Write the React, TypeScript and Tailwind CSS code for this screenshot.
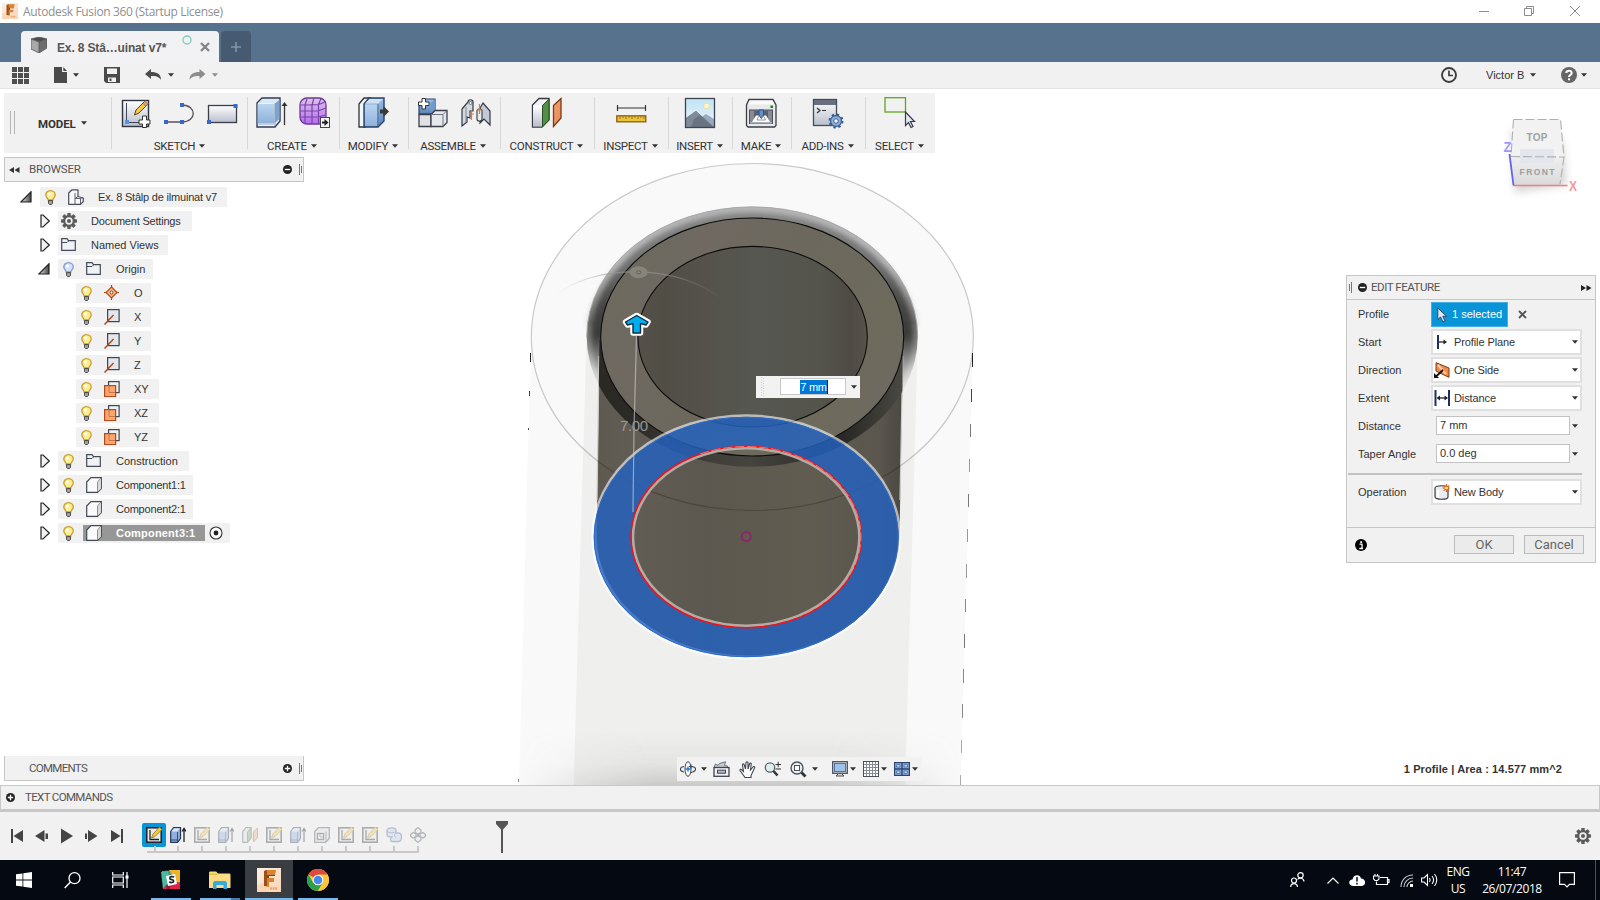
import React from "react";

type IconProps = { w?: number; h?: number; vb?: string; cls?: string; children?: React.ReactNode };

function Svg({ w = 16, h = 16, vb, cls = "", children }: IconProps) {
  return (
    <svg width={w} height={h} viewBox={vb ?? `0 0 ${w} ${h}`} className={`block shrink-0 ${cls}`} fill="none">
      {children}
    </svg>
  );
}

function Caret({ cls = "", color = "#333", w = 7 }: { cls?: string; color?: string; w?: number }) {
  return (
    <Svg w={w} h={4} vb="0 0 7 4" cls={cls}>
      <path d="M0 0H7L3.5 4Z" fill={color} />
    </Svg>
  );
}

/* ---------- shared gradients ---------- */
function Defs() {
  return (
    <svg width="0" height="0" className="absolute">
      <defs>
        <linearGradient id="gLight" x1="0" y1="0" x2="0" y2="1">
          <stop offset="0" stopColor="#fff" />
          <stop offset="1" stopColor="#b9becb" />
        </linearGradient>
        <linearGradient id="gBlue" x1="0" y1="0" x2="0" y2="1">
          <stop offset="0" stopColor="#b9d4ef" />
          <stop offset="1" stopColor="#8fb2da" />
        </linearGradient>
        <linearGradient id="gBlueDk" x1="0" y1="0" x2="0" y2="1">
          <stop offset="0" stopColor="#9dc0e6" />
          <stop offset="1" stopColor="#5783bb" />
        </linearGradient>
        <linearGradient id="gPurple" x1="0" y1="0" x2="0" y2="1">
          <stop offset="0" stopColor="#dcc4ea" />
          <stop offset="1" stopColor="#b86bf2" />
        </linearGradient>
        <linearGradient id="gSky" x1="0" y1="0" x2="0" y2="1">
          <stop offset="0" stopColor="#bfe3f5" />
          <stop offset="1" stopColor="#eef7fb" />
        </linearGradient>
        <linearGradient id="gTri" x1="0" y1="0" x2="1" y2="0">
          <stop offset="0" stopColor="#eee" />
          <stop offset="1" stopColor="#444" />
        </linearGradient>
        <linearGradient id="gOrange" x1="0" y1="0" x2="1" y2="1">
          <stop offset="0" stopColor="#f0a070" />
          <stop offset="1" stopColor="#e98a55" />
        </linearGradient>
        <linearGradient id="gFusion" x1="0" y1="0" x2="1" y2="1">
          <stop offset="0" stopColor="#fdf1e7" />
          <stop offset="1" stopColor="#f9d3b4" />
        </linearGradient>
      </defs>
    </svg>
  );
}

/* ---------- title, tabs and quick access ---------- */
function FusionLogo({ size }: { size: number }) {
  return (
    <Svg w={size} h={size} vb="0 0 24 24">
      <rect width="24" height="24" fill="url(#gFusion)" />
      <path d="M0 17L12 12V24H0Z" fill="#f8c9a4" opacity=".5" />
      <path d="M7 3L10 2H19L18 7H12V10H17V14H12V19L7 18Z" fill="#d9822f" />
      <path d="M7 3L10 2V18L7 18Z" fill="#9c4f1a" />
      <path d="M10 7H18V8H12V10H10Z" fill="#8b4312" />
      <path d="M13 20.5H20" stroke="#f0a468" strokeWidth="2.4" strokeDasharray="2 .6" />
    </Svg>
  );
}

function TitleBar() {
  return (
    <div className="flex h-[23px] items-center bg-white pl-[2px]">
      <div className="mt-[-1px]"><FusionLogo size={16} /></div>
      <span className="ml-[5px] w-[201px] whitespace-nowrap font-['Open_Sans',sans-serif] text-[12px] tracking-[-0.35px] text-[#8f8f8f]">
        Autodesk Fusion 360 (Startup License)
      </span>
      <div className="ml-auto mt-[-2px] flex items-center pr-[20px]">
        <Svg w={10} h={10} cls="mr-[35px]"><path d="M0 5.5H10" stroke="#8d8d8d" /></Svg>
        <Svg w={10} h={10} cls="mr-[36px]"><path d="M.5 2.5H7.5V9.5H.5ZM2.5 2.5V.5H9.5V7.5H7.5" stroke="#8d8d8d" /></Svg>
        <Svg w={10} h={10}><path d="M0 0L10 10M10 0L0 10" stroke="#8d8d8d" /></Svg>
      </div>
    </div>
  );
}

function TabBar() {
  return (
    <div className="flex h-[39px] items-end bg-[#56728c] pl-[21px]">
      <div className="flex h-[31px] w-[198px] items-center rounded-t-[4px] bg-[#f2f2f4] pl-[10px]">
        <Svg w={16} h={16} cls="mt-[-4px]">
          <path d="M0 2L8 0L16 2L8 5Z" fill="#4e4e4e" />
          <path d="M0 2L8 5V16L0 12Z" fill="#a9a9a9" />
          <path d="M16 2L8 5V16L16 11Z" fill="#6e6e6e" />
          <path d="M0 2L8 5L16 2M8 5V16M0 2V12L8 16L16 11V2L8 0Z" stroke="#555" strokeWidth=".8" />
        </Svg>
        <span className="ml-[10px] mt-[2px] w-[110px] whitespace-nowrap text-[12px] font-bold tracking-[-0.15px] text-[#555]">Ex. 8 Stâ…uinat v7*</span>
        <Svg w={10} h={10} cls="ml-[15px] mt-[-14px]"><circle cx="5" cy="5" r="4" stroke="#7fd0bd" strokeWidth="1.4" /></Svg>
        <Svg w={10} h={10} cls="ml-[8px]"><path d="M1 1L9 9M9 1L1 9" stroke="#858585" strokeWidth="2.4" /></Svg>
      </div>
      <div className="ml-[2px] flex h-[31px] w-[30px] items-center justify-center rounded-t-[4px] bg-[#465b72]">
        <Svg w={12} h={12}><path d="M6 1V11M1 6H11" stroke="#8494a4" strokeWidth="1.6" /></Svg>
      </div>
    </div>
  );
}

function QuickBar() {
  return (
    <div className="flex h-[27px] items-center border-b border-[#e4e4e4] bg-[#f1f1f1] pl-[12px] text-[#333]">
      <Svg w={17} h={17}>
        {[0, 6, 12].map((y) => [0, 6, 12].map((x) => <rect key={`${x}-${y}`} x={x} y={y} width="5" height="5" fill="#4f4f4f" />))}
      </Svg>
      <Svg w={13} h={16} cls="ml-[25px]">
        <path d="M0 0H8V5H13V16H0Z" fill="#4a4a4a" />
        <path d="M9.3 0L13 4H9.3Z" fill="#4a4a4a" />
      </Svg>
      <Caret cls="ml-[6px]" w={6} />
      <Svg w={16} h={16} cls="ml-[25px]">
        <path d="M0 0H16V16H2L0 14Z" fill="#4a4a4a" />
        <rect x="3" y="1.5" width="10" height="5.5" fill="#f1f1f1" />
        <rect x="4" y="10.5" width="8" height="4.5" fill="#f1f1f1" />
        <rect x="5.5" y="11.5" width="2" height="2.5" fill="#4a4a4a" />
      </Svg>
      <Svg w={17} h={12} cls="ml-[25px]">
        <path d="M0 5L6 0V3C12 3 16 5 16 11C14 7.500 11 7 6 7V10Z" fill="#4a4a4a" />
      </Svg>
      <Caret cls="ml-[6px]" w={6} />
      <Svg w={17} h={12} cls="ml-[15px]">
        <path d="M16.500 5L10.500 0V3C4.500 3 .5 5 .5 11C2.500 7.500 5.500 7 10.500 7V10Z" fill="#8d8d8d" />
      </Svg>
      <Caret cls="ml-[6px]" color="#8d8d8d" w={6} />
      <div className="ml-auto flex items-center">
        <Svg w={16} h={16}>
          <circle cx="8" cy="8" r="7" stroke="#3d3d3d" strokeWidth="1.9" />
          <path d="M8 3.500V8.500H12" stroke="#3d3d3d" strokeWidth="1.700" />
        </Svg>
        <span className="ml-[29px] w-[38px] whitespace-nowrap text-[11px] text-[#333]">Victor B</span>
        <Caret cls="ml-[6px]" w={6} />
        <Svg w={16} h={16} cls="ml-[25px]">
          <circle cx="8" cy="8" r="8" fill="#666" />
          <path d="M5.300 6C5.300 3 10.700 3 10.700 6C10.700 8 8 8 8 10" stroke="#fff" strokeWidth="2" />
          <rect x="7" y="11.300" width="2.100" height="2" fill="#fff" />
        </Svg>
        <Caret cls="ml-[4px] mr-[13px]" w={6} />
      </div>
    </div>
  );
}

/* ---------- ribbon ---------- */
const ribbonIcons: Record<string, React.ReactNode> = {
  sketch: (
    <>
      <rect x="1.500" y="3.500" width="26" height="26" fill="url(#gLight)" stroke="#2f3440" strokeWidth="1.400" />
      <path d="M5.500 6V25.500H24" stroke="#3f4656" />
      <rect x="4" y="23" width="4" height="4" fill="#4f95e8" />
      <path d="M13.500 18L15 13L24 4L27 7L18 16Z" fill="#f7c948" stroke="#5a4422" />
      <path d="M22 6L25 9" stroke="#ad9174" strokeWidth="1.500" />
      <path d="M24.500 3.500L27.500 6.500L26 8L23 5Z" fill="#c98b6c" />
      <path d="M21.500 19H25.500V23H29V27H25.500V30.500H21.500V27H18V23H21.500Z" fill="#fff" stroke="#333" />
    </>
  ),
  arc: (
    <>
      <path d="M2 25H18M18 8C33 8 33 25 18 25" stroke="#555" strokeWidth="1.300" />
      <path d="M0 23H4V27H0ZM16 23H20V27H16ZM16 6H20V10H16Z" fill="#3769c8" />
    </>
  ),
  rect: (
    <>
      <rect x="1.500" y="8.500" width="28" height="17" fill="url(#gLight)" stroke="#3b3f49" strokeWidth="1.300" />
      <path d="M0 23H4V27H0ZM26.500 7H30.500V11H26.500Z" fill="#3769c8" />
    </>
  ),
  extrude: (
    <>
      <path d="M1 6L6 1H24V24L19 30H1Z" fill="#eef1f6" stroke="#2f3c58" strokeWidth="1.400" />
      <path d="M1.700 7H18.500V26H1.700Z" fill="url(#gBlue)" />
      <path d="M2.500 6L6.500 2H22.500L19 6Z" fill="#d9e8f8" />
      <path d="M19 6.500L23.500 2.500V22L19 26Z" fill="#7fa3cf" />
      <path d="M1.500 27H18.500M19 6V29" stroke="#8796b2" strokeWidth=".8" />
      <path d="M28.500 28V7" stroke="#333" strokeWidth="1.300" />
      <path d="M25.500 9L28.500 5L31.500 9Z" fill="#333" />
    </>
  ),
  form: (
    <>
      <rect x="1" y="1" width="26" height="26" rx="7" fill="url(#gPurple)" stroke="#6a3a93" strokeWidth="1.300" />
      <path d="M1.500 8C10 8 15 8 19 7.500C23 6.500 26 5 26.500 4M1.500 14H19L27 11M1.500 20H19L27 18M8 2L6 8V27M15 1L13 8V27M22 1.500L19.500 7.500V26.500" stroke="#7844a6" strokeWidth="1.200" />
      <rect x="21.500" y="20.500" width="9" height="10" fill="#f5f5f5" stroke="#444" />
      <path d="M23 25.500H26" stroke="#222" strokeWidth="2" />
      <path d="M25.500 22L29.500 25.500L25.500 29Z" fill="#222" />
    </>
  ),
  press: (
    <>
      <path d="M2 7L7 1H13L8 7V30H2Z" fill="#f4f5f7" stroke="#30343d" strokeWidth="1.300" />
      <path d="M7 7L12 1H27V24L21 30H7Z" fill="url(#gBlueDk)" stroke="#2b4068" strokeWidth="1.400" />
      <path d="M8 6.500L12.500 2H26L21 6.500Z" fill="#cfe2f5" />
      <path d="M8 7.500H20V29H8Z" fill="url(#gBlue)" />
      <path d="M21 7V29" stroke="#59779f" />
      <path d="M23 12.500H26.500V9L32 14.500L26.500 20V16.500H23Z" fill="#3a3a3a" />
    </>
  ),
  component: (
    <>
      <path d="M8 2H18V14L14 17H2V9Z" fill="url(#gBlueDk)" stroke="#2b4068" strokeWidth="1.200" />
      <path d="M18 2V13L14 17V6Z" fill="#6f99cf" />
      <path d="M2 17.500H14V29.500H2Z" fill="#dfe1e5" stroke="#3b3f49" strokeWidth="1.300" />
      <path d="M14 17.500L18 13.500H30V25.500L26 29.500H14Z" fill="#e6e8ec" stroke="#3b3f49" strokeWidth="1.300" />
      <path d="M14 17.500H26V29.500M26 17.500L30 13.500" stroke="#6e7480" />
      <path d="M5 1.500H8.500V5H12V8.500H8.500V12H5V8.500H1.500V5H5Z" fill="#fff" stroke="#333" />
    </>
  ),
  joint: (
    <>
      <path d="M2 12L8 5C8 2 13 2 13 5V14H10V21L7 20V25L2 29Z" fill="#d4d8df" stroke="#353a44" strokeWidth="1.200" />
      <path d="M6 10V25" stroke="#7f8794" />
      <circle cx="10.500" cy="6" r="1.500" fill="#fff" stroke="#555" strokeWidth=".8" />
      <path d="M20 11L23 6L30 14V28L24 22L20 26Z" fill="#c4cad5" stroke="#353a44" strokeWidth="1.200" />
      <rect x="17" y="12" width="5" height="12" rx="2" fill="#e9ebef" stroke="#353a44" strokeWidth="1.100" />
      <path d="M11.500 14V23M19.500 7V17M9 17H14M17 13H22" stroke="#e77b2b" strokeWidth="1.200" />
    </>
  ),
  plane: (
    <>
      <path d="M1.500 8L8 1.500H18V23L11 30H1.500Z" fill="#eef0f3" stroke="#333842" strokeWidth="1.300" />
      <path d="M2 8.500H11V29.500H2Z" fill="url(#gLight)" />
      <path d="M11.500 8.500L18 2V23L11.500 29.500Z" fill="#539047" stroke="#274f21" />
      <path d="M22.500 8.500L30 1.500V21L22.500 29.500Z" fill="url(#gOrange)" stroke="#7b3915" strokeWidth="1.300" />
    </>
  ),
  measure: (
    <>
      <path d="M2.500 8V14M30.500 8V14M2.500 11H30.500" stroke="#333" strokeWidth="1.200" />
      <rect x="1.800" y="18.800" width="29" height="6" fill="#eac33c" stroke="#8b5d13" strokeWidth="1.300" />
      <path d="M5 19.500V22M8 19.500V21M11 19.500V22M14 19.500V21M17 19.500V22M20 19.500V21M23 19.500V22M26 19.500V21M29 19.500V22" stroke="#8b5d13" strokeWidth=".8" />
    </>
  ),
  image: (
    <>
      <rect x="1.500" y="1.500" width="29" height="29" fill="url(#gSky)" />
      <circle cx="22.500" cy="9" r="2.800" fill="#fff8d8" stroke="#f5dc8c" />
      <path d="M12 24L22 17L30 22V30H12Z" fill="#9aa9bd" />
      <path d="M2 21L12 14L30 30H2Z" fill="#687384" />
      <path d="M2 21L12 14L16 18L10 22L7 30H2Z" fill="#808b9a" />
      <rect x="1.500" y="1.500" width="29" height="29" stroke="#3c4452" strokeWidth="1.300" />
    </>
  ),
  printer: (
    <>
      <path d="M4 2.500H28L31 8V28.500L29.500 30H3L1.500 28.500V8Z" fill="#e7e9ec" stroke="#3a3e46" strokeWidth="1.300" />
      <path d="M5 3.500H27L29.500 7.500H3Z" fill="#fafafa" />
      <rect x="25.500" y="8.500" width="2.500" height="2.500" fill="#17851d" />
      <rect x="4.500" y="13" width="23" height="13.500" fill="#868b94" stroke="#4a4f58" />
      <path d="M9 14H23V22H9Z" fill="#5b606a" />
      <path d="M7 25L11 18.500H21L25 25Z" fill="#fff" />
      <path d="M5 26H27" stroke="#cfd2d8" />
      <path d="M14 13H18.500V18L16.300 21.500L14 18Z" fill="#5c93dd" stroke="#28549a" />
      <path d="M12 23L13.500 19.500H19L20.500 23Z" stroke="#7b818c" strokeWidth=".8" />
    </>
  ),
  addins: (
    <>
      <rect x="1.500" y="2.500" width="23" height="26" fill="url(#gLight)" stroke="#454b57" strokeWidth="1.300" />
      <rect x="2" y="3" width="22" height="5" fill="#687080" />
      <path d="M5 11L8 13.500L5 16M10 13.500H14" stroke="#333" strokeWidth="1.200" />
      <circle cx="24" cy="24" r="5.500" fill="#8fb0d8" stroke="#3a5f92" strokeWidth="1.300" />
      <circle cx="24" cy="24" r="6.500" stroke="#3a5f92" strokeWidth="2" strokeDasharray="2.400 2.700" />
      <circle cx="24" cy="24" r="2.300" fill="#f4f6fa" stroke="#3a5f92" />
    </>
  ),
  select: (
    <>
      <rect x="1" y=".7" width="20.500" height="14.300" stroke="#61a51f" strokeWidth="1.300" />
      <path d="M21.500 15V28.500L24.500 25.500L27 30.500L29 29.500L26.500 24.500H30.500Z" fill="#e5e9f0" stroke="#353b47" strokeWidth="1.200" />
    </>
  ),
};

const groups: { label: string; icons: string[]; w: string; shift?: boolean }[] = [
  { label: "SKETCH", icons: ["sketch", "arc", "rect"], w: "w-[136px]" },
  { label: "CREATE", icons: ["extrude", "form"], w: "w-[92px]", shift: true },
  { label: "MODIFY", icons: ["press"], w: "w-[69px]" },
  { label: "ASSEMBLE", icons: ["component", "joint"], w: "w-[92px]", shift: true },
  { label: "CONSTRUCT", icons: ["plane"], w: "w-[94px]" },
  { label: "INSPECT", icons: ["measure"], w: "w-[74px]" },
  { label: "INSERT", icons: ["image"], w: "w-[64px]" },
  { label: "MAKE", icons: ["printer"], w: "w-[59px]" },
  { label: "ADD-INS", icons: ["addins"], w: "w-[74px]" },
  { label: "SELECT", icons: ["select"], w: "w-[70px]" },
];

function Ribbon() {
  return (
    <div className="flex h-[60px] w-[931px] bg-[#f1f1f1]">
      <div className="flex w-[107px] items-center pl-[6px]">
        <Svg w={6} h={24}><path d="M.5 0V23M4.500 0V23" stroke="#b5b5b5" /></Svg>
        <span className="ml-[22px] mt-[3px] w-[38px] whitespace-nowrap font-[Roboto,sans-serif] text-[11.5px] font-bold tracking-[-0.1px] text-[#333]">MODEL</span>
        <Caret cls="ml-[5px]" w={6} />
      </div>
      {groups.map((g) => (
        <div key={g.label} className={`flex ${g.w}`}>
          <div className="mt-[4px] h-[52px] w-px shrink-0 bg-[#d7d7d7]" />
          <div className={`flex flex-1 flex-col items-center ${g.icons.length === 1 ? "pr-[2px]" : ""}`}>
            <div className="mt-[4px] flex gap-[11px]">
              {g.icons.map((i) => (
                <Svg key={i} w={32} h={32}>{ribbonIcons[i]}</Svg>
              ))}
            </div>
            <div className={`mt-[10px] flex h-[15px] items-center gap-[4px] whitespace-nowrap font-[Roboto,sans-serif] text-[11.5px] tracking-[-0.25px] text-[#333] ${g.shift ? "pr-[3px]" : ""}`}>
              {g.label}
              <Caret w={6} cls="mt-[-1px]" />
            </div>
          </div>
        </div>
      ))}
    </div>
  );
}

/* ---------- browser tree ---------- */
function Bulb({ off = false }: { off?: boolean }) {
  return (
    <Svg w={11} h={15}>
      <path d="M5.500 .7C2.500 .7 .8 2.800 .8 5C.8 7.500 3 8 3.200 10H7.800C8 8 10.200 7.500 10.200 5C10.200 2.800 8.500 .7 5.500 .7Z" fill={off ? "#d5e2fb" : "#ffef8a"} stroke={off ? "#7f9bd0" : "#c79a35"} strokeWidth="1.300" />
      <circle cx="4.500" cy="4" r="1.500" fill="#fff" />
      <path d="M3.500 10.500H7.500V13.500L6.500 14.500H4.500L3.500 13.500Z" fill="#a0a0a0" stroke="#4c4c4c" />
    </Svg>
  );
}

function Gear({ size = 16 }: { size?: number }) {
  return (
    <Svg w={size} h={size} vb="0 0 16 16">
      <g fill="#5b5b5b">
        {[0, 45, 90, 135].map((a) => (
          <rect key={a} x="6.300" y="0" width="3.400" height="16" rx=".6" transform={`rotate(${a} 8 8)`} />
        ))}
        <circle cx="8" cy="8" r="6" />
      </g>
      <circle cx="8" cy="8" r="3.700" fill="#f1f1f1" />
      <circle cx="8" cy="8" r="2" fill="#5b5b5b" />
    </Svg>
  );
}

const treeIcons: Record<string, React.ReactNode> = {
  root: (
    <>
      <path d="M.7 4L4 .8H10V7.500L15.300 9V12.500L12.500 15.300H.7Z" fill="#f8f9fa" stroke="#474c58" strokeWidth="1.200" strokeLinejoin="round" />
      <path d="M7 9.500H12.500V15M7 4V15M7 9.500L10 7.500M12.500 9.500L15 8.500" stroke="#5d636e" />
    </>
  ),
  folder: (
    <>
      <path d="M.7 13.300V1.700H6L7.500 3.700H14.300V13.300Z" fill="#f0f2f5" stroke="#454b57" strokeWidth="1.200" />
      <path d="M1 5.500H6L7.500 4" stroke="#454b57" />
    </>
  ),
  point: (
    <>
      <path d="M7.500 0V15M0 7.500H15" stroke="#a54a17" strokeWidth="1.200" />
      <path d="M7.500 2L13 7.500L7.500 13L2 7.500Z" fill="#fcb98e" stroke="#b04d14" strokeWidth="1.200" />
      <circle cx="7.500" cy="7.500" r="1.500" fill="#fff" stroke="#752f08" strokeWidth=".9" />
    </>
  ),
  axis: (
    <>
      <rect x="3.600" y=".6" width="11.500" height="12" fill="#e3e6ea" stroke="#3f4450" strokeWidth="1.200" />
      <path d="M.5 15.500L9.500 6" stroke="#b5491b" strokeWidth="1.500" />
    </>
  ),
  plane: (
    <>
      <rect x="4.600" y=".6" width="10.500" height="11" fill="#eef0f3" stroke="#3f4450" strokeWidth="1.200" />
      <rect x=".6" y="4.600" width="11" height="11" fill="#fba76d" stroke="#b5491b" strokeWidth="1.200" />
      <path d="M5 5V11.500H11" stroke="#c9764a" />
    </>
  ),
  body: (
    <>
      <path d="M.7 5L5 .7H15.300V11.500L11.500 15.300H.7Z" fill="#fbfbfc" stroke="#424753" strokeWidth="1.200" />
      <path d="M11.500 5L15 1V11.500L11.500 15Z" fill="#d5d8dd" />
      <path d="M11.500 5V15M11.500 5L15 1" stroke="#767c88" strokeWidth=".8" />
    </>
  ),
};

type Row = { label: string; indent: string; w: string; arrow?: "open" | "closed"; bulb?: "on" | "off"; icon: string; selected?: boolean; tight?: boolean };

const rows: Row[] = [
  { label: "Ex. 8 Stâlp de ilmuinat v7", indent: "ml-[16px]", w: "w-[187px]", arrow: "open", bulb: "on", icon: "root", tight: true },
  { label: "Document Settings", indent: "ml-[34px]", w: "w-[134px]", arrow: "closed", icon: "gear", tight: true },
  { label: "Named Views", indent: "ml-[34px]", w: "w-[110px]", arrow: "closed", icon: "folder" },
  { label: "Origin", indent: "ml-[34px]", w: "w-[95px]", arrow: "open", bulb: "off", icon: "folder" },
  { label: "O", indent: "ml-[52px]", w: "w-[75px]", bulb: "on", icon: "point" },
  { label: "X", indent: "ml-[52px]", w: "w-[75px]", bulb: "on", icon: "axis" },
  { label: "Y", indent: "ml-[52px]", w: "w-[75px]", bulb: "on", icon: "axis" },
  { label: "Z", indent: "ml-[52px]", w: "w-[75px]", bulb: "on", icon: "axis" },
  { label: "XY", indent: "ml-[52px]", w: "w-[83px]", bulb: "on", icon: "plane" },
  { label: "XZ", indent: "ml-[52px]", w: "w-[83px]", bulb: "on", icon: "plane" },
  { label: "YZ", indent: "ml-[52px]", w: "w-[83px]", bulb: "on", icon: "plane" },
  { label: "Construction", indent: "ml-[34px]", w: "w-[131px]", arrow: "closed", bulb: "on", icon: "folder" },
  { label: "Component1:1", indent: "ml-[34px]", w: "w-[135px]", arrow: "closed", bulb: "on", icon: "body", tight: true },
  { label: "Component2:1", indent: "ml-[34px]", w: "w-[135px]", arrow: "closed", bulb: "on", icon: "body", tight: true },
  { label: "Component3:1", indent: "ml-[34px]", w: "w-[172px]", arrow: "closed", bulb: "on", icon: "body", selected: true },
];

function TreeRow({ r }: { r: Row }) {
  const text = r.selected ? "font-bold tracking-[0.2px] text-white" : r.tight ? "tracking-[-0.2px] text-[#333]" : "text-[#333]";
  return (
    <div className={`flex h-[20px] items-center ${r.indent}`}>
      <div className="w-[20px]">
        {r.arrow === "open" && (
          <Svg w={12} h={12}><path d="M11 .8V11H.8Z" fill="url(#gTri)" stroke="#222" strokeWidth="1.200" /></Svg>
        )}
        {r.arrow === "closed" && (
          <Svg w={12} h={14} cls="ml-[2px]"><path d="M1 1L3 1L9.300 7L3 13H1Z" fill="#f1f1f1" stroke="#222" strokeWidth="1.200" /></Svg>
        )}
      </div>
      <div className={`flex h-[20px] items-center bg-[#f1f1f1] ${r.w}`}>
        {r.bulb && <div className="ml-[5px] w-[20px]"><Bulb off={r.bulb === "off"} /></div>}
        <div className={`flex items-center ${r.selected ? "h-[16px] w-[122px] bg-[#979797]" : ""}`}>
          <div className="ml-[3px] w-[30px]">
            {r.icon === "gear" ? <Gear /> : <Svg w={16} h={16}>{treeIcons[r.icon]}</Svg>}
          </div>
          <span className={`whitespace-nowrap text-[11px] ${text}`}>{r.label}</span>
        </div>
        {r.selected && (
          <Svg w={14} h={14} cls="ml-[4px]">
            <circle cx="7" cy="7" r="6" fill="#fff" stroke="#333" strokeWidth="1.100" />
            <circle cx="7" cy="7" r="2.400" fill="#222" />
          </Svg>
        )}
      </div>
    </div>
  );
}

function RoundSign({ plus = false }: { plus?: boolean }) {
  return (
    <Svg w={9} h={9} vb="0 0 10 10">
      <circle cx="5" cy="5" r="5" fill="#222" />
      <path d={plus ? "M2 5H8M5 2V8" : "M2 5H8"} stroke="#fff" strokeWidth="1.500" />
    </Svg>
  );
}

function Grip() {
  return <Svg w={4} h={11}><path d="M.5 0V11M2.500 2V9" stroke="#777" /></Svg>;
}

function BrowserPanel() {
  return (
    <div className="flex w-[300px] flex-col">
      <div className="flex h-[25px] items-center border border-[#c6c6c6] bg-[#f1f1f1] pl-[4px]">
        <Svg w={11} h={6}><path d="M5 0V6L0 3ZM10.500 0V6L5.500 3Z" fill="#333" /></Svg>
        <span className="ml-[9px] font-[Roboto,sans-serif] text-[11.5px] tracking-[-0.15px] text-[#555]">BROWSER</span>
        <div className="ml-auto mr-[7px]"><RoundSign /></div>
        <Grip />
      </div>
      <div className="mt-[5px] flex flex-col gap-[4px]">
        {rows.map((r) => <TreeRow key={r.label} r={r} />)}
      </div>
    </div>
  );
}

function CommentsPanel() {
  return (
    <div className="flex h-[25px] w-[300px] items-center border border-t-0 border-[#c6c6c6] bg-[#f1f1f1]">
      <span className="ml-[24px] mt-px font-[Roboto,sans-serif] text-[11.5px] tracking-[-0.7px] text-[#555]">COMMENTS</span>
      <div className="ml-auto mr-[7px]"><RoundSign plus /></div>
      <Grip />
    </div>
  );
}

/* ---------- edit feature dialog ---------- */
const fieldIcons: Record<string, React.ReactNode> = {
  start: (
    <>
      <path d="M4 1V15" stroke="#1b3158" strokeWidth="2" />
      <path d="M5 8H11" stroke="#222" strokeWidth="1.300" />
      <path d="M9.500 5.500L13 8L9.500 10.500Z" fill="#222" />
    </>
  ),
  side: (
    <>
      <path d="M2 .7L15 6V15.300L10 13L2 9Z" fill="#f18a45" stroke="#7b3a17" />
      <path d="M4 3L12 12" stroke="#fbd0ae" strokeWidth="2" />
      <path d="M2 14.500L9 8" stroke="#111" strokeWidth="1.800" />
      <path d="M0 11V16H5Z" fill="#111" />
    </>
  ),
  dist: (
    <>
      <path d="M1.500 0V16M15 0V16" stroke="#1b3158" strokeWidth="2" />
      <path d="M4 8H13" stroke="#222" strokeWidth="1.300" />
      <path d="M6 5.500L2.500 8L6 10.500ZM10.500 5.500L14 8L10.500 10.500Z" fill="#222" />
    </>
  ),
  body: (
    <>
      <path d="M1 4C1 1 14 1 14 4V13C14 16 1 16 1 13Z" fill="#e9ebef" stroke="#363b46" strokeWidth="1.200" />
      <path d="M4 6V14" stroke="#fff" strokeWidth="2.500" />
      <path d="M12.500 0V8M8.500 4H16M9.800 1.300L15.200 6.700M15.200 1.300L9.800 6.700" stroke="#d5591b" strokeWidth="1.200" />
      <circle cx="12.500" cy="4" r="1.600" fill="#ffe14a" />
    </>
  ),
};

function SelectField({ label, value, icon }: { label: string; value: string; icon: string }) {
  return (
    <div className="flex h-[28px] items-center">
      <span className="w-[73px] shrink-0">{label}</span>
      <div className="flex h-[26px] w-[151px] items-center border-2 border-[#e0e0e0] bg-white">
        <Svg w={16} h={16} cls="ml-[1px]">{fieldIcons[icon]}</Svg>
        <span className="ml-[4px] whitespace-nowrap tracking-[-0.1px]">{value}</span>
        <Caret cls="ml-auto mr-[2px]" w={6} />
      </div>
    </div>
  );
}

function InputField({ label, value }: { label: string; value: string }) {
  return (
    <div className="flex h-[28px] items-center">
      <span className="w-[78px] shrink-0 whitespace-nowrap">{label}</span>
      <div className="mt-[-1px] flex h-[19px] w-[134px] items-center border border-[#c2c2c2] bg-white pl-[3px]">{value}</div>
      <Caret cls="ml-[2px]" w={6} />
    </div>
  );
}

function EditFeature() {
  return (
    <div className="flex h-[288px] w-[250px] flex-col border border-[#c6c6c6] bg-[#f1f1f1] text-[11px] text-[#333]">
      <div className="flex h-[24px] items-center border-b border-[#c6c6c6] pl-px">
        <div className="scale-x-[-1]"><Grip /></div>
        <div className="ml-[6px]"><RoundSign /></div>
        <span className="ml-[4px] font-[Roboto,sans-serif] text-[11.5px] tracking-[-0.45px] text-[#555]">EDIT FEATURE</span>
        <Svg w={11} h={6} cls="ml-auto mr-[3px]"><path d="M0 0V6L5 3ZM5.500 0V6L10.500 3Z" fill="#222" /></Svg>
      </div>
      <div className="flex h-[227px] flex-col pl-[11px]">
        <div className="flex h-[29px] items-center">
          <span className="w-[73px]">Profile</span>
          <div className="flex h-[25px] w-[77px] items-center border border-[#42aee6] bg-[#0a94d8] text-white">
            <Svg w={11} h={16} cls="ml-[5px]"><path d="M.8 1V12.500L3.500 10L6 15L8 14L5.800 9.300H9.500Z" fill="#dfe5ee" stroke="#2c4a6a" /></Svg>
            <span className="ml-[4px] whitespace-nowrap text-[11px]">1 selected</span>
          </div>
          <Svg w={9} h={9} cls="ml-[10px]"><path d="M1 1L8 8M8 1L1 8" stroke="#555" strokeWidth="1.900" /></Svg>
        </div>
        <div className="mt-[-1px] flex flex-col">
          <SelectField label="Start" value="Profile Plane" icon="start" />
          <SelectField label="Direction" value="One Side" icon="side" />
          <SelectField label="Extent" value="Distance" icon="dist" />
          <InputField label="Distance" value="7 mm" />
          <InputField label="Taper Angle" value="0.0 deg" />
        </div>
        <div className="ml-[-10px] mt-[5px] h-[2px] w-[234px] bg-[#c2c2c2]" />
        <div className="mt-[3px]"><SelectField label="Operation" value="New Body" icon="body" /></div>
      </div>
      <div className="flex flex-1 items-center border-t border-[#c6c6c6] pb-px pl-[8px] pr-[11px]">
        <Svg w={12} h={12}>
          <circle cx="6" cy="6" r="6" fill="#000" />
          <path d="M4.500 5.200H7V9.500M4.300 9.500H8" stroke="#fff" strokeWidth="1.300" />
          <rect x="5.200" y="2.200" width="1.900" height="1.700" fill="#fff" />
        </Svg>
        <div className="ml-auto flex gap-[10px] font-[Roboto,sans-serif] text-[13px] text-[#666]">
          <div className="flex h-[19px] w-[60px] items-center justify-center border border-[#bcbcbc] bg-[#ebebeb]">OK</div>
          <div className="flex h-[19px] w-[60px] items-center justify-center border border-[#bcbcbc] bg-[#ebebeb]">Cancel</div>
        </div>
      </div>
    </div>
  );
}

/* ---------- model canvas ---------- */
const dashes: [number, number, number, string][] = [
  [530.500, 353, 362, "#222"], [529.500, 391, 396, "#444"], [528.500, 428, 430, "#555"], [518.500, 779, 782, "#888"],
  [972.500, 353, 367, "#222"], [971.500, 389, 402, "#444"], [970.500, 424, 437, "#777"], [969.500, 459, 472, "#999"],
  [968.500, 494, 507, "#777"], [967.500, 529, 542, "#999"], [966.500, 564, 578, "#999"], [965.500, 599, 612, "#888"],
  [964.500, 634, 648, "#777"], [963.500, 669, 683, "#888"], [962.500, 704, 718, "#888"], [961.500, 740, 753, "#aaa"], [960.500, 775, 785, "#aaa"],
];

function ModelCanvas() {
  return (
    <svg viewBox="0 89 1600 696" width="1600" height="696" className="absolute inset-0 font-['Liberation_Sans',sans-serif]" fill="none">
      <defs>
        <linearGradient id="rim" x1="0" y1="206" x2="0" y2="400" gradientUnits="userSpaceOnUse">
          <stop offset="0" stopColor="#b4b4b4" />
          <stop offset=".3" stopColor="#b8b8b8" />
          <stop offset=".45" stopColor="#9a9a9a" />
          <stop offset=".6" stopColor="#6d6c6a" />
          <stop offset=".72" stopColor="#8a8a88" />
          <stop offset=".85" stopColor="#d2d2d2" />
          <stop offset="1" stopColor="#eee" />
        </linearGradient>
        <linearGradient id="rimDark" x1="0" y1="210" x2="0" y2="400" gradientUnits="userSpaceOnUse">
          <stop offset="0" stopColor="#868686" />
          <stop offset=".3" stopColor="#707070" />
          <stop offset=".5" stopColor="#474644" />
          <stop offset=".66" stopColor="#3a3937" />
          <stop offset=".76" stopColor="#777" />
          <stop offset=".88" stopColor="#c8c8c8" />
          <stop offset="1" stopColor="#eee" />
        </linearGradient>
        <linearGradient id="side" x1="597" y1="0" x2="903" y2="0" gradientUnits="userSpaceOnUse">
          <stop offset="0" stopColor="#5e5a51" />
          <stop offset=".12" stopColor="#625d54" />
          <stop offset=".35" stopColor="#5c584f" />
          <stop offset=".7" stopColor="#605c50" />
          <stop offset=".92" stopColor="#5b564e" />
          <stop offset="1" stopColor="#4b4842" />
        </linearGradient>
        <linearGradient id="chamfer" x1="597" y1="0" x2="903" y2="0" gradientUnits="userSpaceOnUse">
          <stop offset="0" stopColor="#2b2924" />
          <stop offset=".12" stopColor="#2b2a26" />
          <stop offset=".25" stopColor="#3a3934" />
          <stop offset=".5" stopColor="#46443e" />
          <stop offset=".8" stopColor="#282723" />
          <stop offset="1" stopColor="#4a4842" />
        </linearGradient>
        <linearGradient id="face" x1="601" y1="230" x2="904" y2="440" gradientUnits="userSpaceOnUse">
          <stop offset="0" stopColor="#6d6a5d" />
          <stop offset=".25" stopColor="#6f6961" />
          <stop offset=".5" stopColor="#6c685d" />
          <stop offset=".75" stopColor="#6d6b5c" />
          <stop offset="1" stopColor="#6f6861" />
        </linearGradient>
        <linearGradient id="hole" x1="638" y1="0" x2="867" y2="0" gradientUnits="userSpaceOnUse">
          <stop offset="0" stopColor="#55514a" />
          <stop offset=".12" stopColor="#514e46" />
          <stop offset=".3" stopColor="#54524b" />
          <stop offset=".5" stopColor="#565751" />
          <stop offset=".8" stopColor="#54534c" />
          <stop offset=".93" stopColor="#4e4b44" />
          <stop offset="1" stopColor="#57534b" />
        </linearGradient>
        <linearGradient id="floor" x1="0" y1="730" x2="0" y2="785" gradientUnits="userSpaceOnUse">
          <stop offset="0" stopColor="#888" stopOpacity="0" />
          <stop offset=".6" stopColor="#888" stopOpacity=".1" />
          <stop offset="1" stopColor="#777" stopOpacity=".3" />
        </linearGradient>
        <linearGradient id="floorMask" x1="519" y1="0" x2="961" y2="0" gradientUnits="userSpaceOnUse">
          <stop offset="0" stopColor="#000" />
          <stop offset=".3" stopColor="#fff" />
          <stop offset=".7" stopColor="#fff" />
          <stop offset="1" stopColor="#000" />
        </linearGradient>
        <mask id="fm"><rect x="519" y="700" width="442" height="90" fill="url(#floorMask)" /></mask>
        <linearGradient id="arcFade" x1="556" y1="0" x2="724" y2="0" gradientUnits="userSpaceOnUse">
          <stop offset="0" stopColor="#aaa" stopOpacity="0" />
          <stop offset=".5" stopColor="#8d8d88" stopOpacity=".9" />
          <stop offset="1" stopColor="#999" stopOpacity="0" />
        </linearGradient>
        <clipPath id="bodyClip"><path d="M599.500 340L596.500 540H900.500L903 340Z" /></clipPath>
        <clipPath id="rimClip"><ellipse cx="752.200" cy="336.700" rx="165.500" ry="130.200" /></clipPath>
        <filter id="soft" x="-10%" y="-10%" width="120%" height="120%"><feGaussianBlur stdDeviation="2.500" /></filter>
        <filter id="cubeSoft" x="-30%" y="-30%" width="160%" height="160%"><feGaussianBlur stdDeviation="4" /></filter>
        <linearGradient id="cubeFront" x1="0" y1="0" x2="0" y2="1">
          <stop offset="0" stopColor="#efefef" />
          <stop offset="1" stopColor="#dadada" />
        </linearGradient>
      </defs>

      <path d="M531.500 337L527 480L519 785H960.500L969.500 470L973.300 337Z" fill="#f9f9f9" />
      <ellipse cx="752.300" cy="337" rx="221" ry="173.500" fill="#f9f9f9" />
      <path d="M586.700 336L582.300 480L573.700 785H905L914 480L917.700 336Z" fill="#efefed" />
      <rect x="519" y="730" width="442" height="55" fill="url(#floor)" mask="url(#fm)" />

      <path d="M588 326A165.500 129 0 0 1 916.500 326" stroke="#d8d8d8" strokeWidth="4" filter="url(#soft)" />
      <ellipse cx="752.200" cy="336.700" rx="165.500" ry="130" fill="url(#rim)" />
      <g clipPath="url(#rimClip)">
        <ellipse cx="752.200" cy="337.500" rx="161" ry="125" fill="url(#rimDark)" filter="url(#soft)" />
      </g>
      <path d="M586.700 336.700A165.500 129.800 0 0 1 917.700 336.700" stroke="#a8a8a8" strokeWidth="1" />
      <path d="M599.500 345L596.500 536A149.500 118 0 0 0 899.500 536L903 345Z" fill="url(#side)" />
      <path d="M599 356L597 500M902.700 356L900 500" stroke="#cfcdc9" strokeWidth="1.200" />
      <ellipse cx="752.200" cy="336.700" rx="165.500" ry="130" fill="url(#chamfer)" clipPath="url(#bodyClip)" />
      <ellipse cx="752.200" cy="337" rx="151.500" ry="119" fill="url(#face)" stroke="#0d0d0c" strokeWidth="1.100" />
      <ellipse cx="752.600" cy="336.700" rx="114.700" ry="90.300" fill="url(#hole)" stroke="#0d0d0c" strokeWidth="1.100" />

      <ellipse cx="752.300" cy="337" rx="221" ry="173.500" stroke="#000" strokeOpacity=".2" strokeWidth="1.200" />
      {dashes.map(([x, a, b, c]) => <path key={`${x}-${a}`} d={`M${x} ${a}V${b}`} stroke={c} strokeWidth="1" />)}

      <path fillRule="evenodd" d="M593.500 537A152.700 120.300 0 1 1 898.900 537A152.700 120.300 0 1 1 593.500 537ZM631.500 537A114.800 90.300 0 1 0 861.100 537A114.800 90.300 0 1 0 631.500 537Z" fill="#2361bf" fillOpacity=".82" />
      <ellipse cx="746.200" cy="537" rx="153.700" ry="121.500" stroke="#fff" strokeOpacity=".6" strokeWidth="2.500" />
      <ellipse cx="746.200" cy="537" rx="152" ry="119.700" stroke="#2d6ccb" strokeWidth="1" />
      <ellipse cx="746.200" cy="537" rx="113.300" ry="88.800" stroke="#b3aca6" strokeWidth="2.800" />
      <ellipse cx="746.200" cy="537" rx="115.200" ry="90.700" stroke="#f01418" strokeWidth="1.500" />
      <path d="M700 454A115.200 90.700 0 0 1 861 537A115 90.700 0 0 1 800 616" stroke="#f58a8a" strokeWidth=".8" strokeDasharray="9 3" />
      <circle cx="746.300" cy="536.600" r="4.600" stroke="#93226c" strokeWidth="2" />

      <path d="M636.500 336L634 430L633 512" stroke="#d5d5d5" strokeOpacity=".6" strokeWidth="1.200" />
      <path d="M556 296C590 264 680 262 724 301" stroke="url(#arcFade)" strokeWidth="1.200" />
      <ellipse cx="638.700" cy="272.300" rx="9" ry="6" fill="#87847c" />
      <ellipse cx="638.700" cy="272.300" rx="2.400" ry="1.500" stroke="#66635c" />
      <path d="M636.700 315.500L648 322L646 325L640.500 324V333H633V324L627.500 325L625.500 322Z" fill="#fff" stroke="#fff" strokeWidth="5.500" strokeLinejoin="round" />
      <path d="M636.700 315.500L648 322L646 325L640.500 323.500V333H633V323.500L627.500 325L625.500 322Z" fill="#00aef0" stroke="#0b3040" strokeWidth="1.400" strokeLinejoin="round" />
      <text x="620" y="430.500" fontSize="15" fill="#9b9893" textLength="28">7.00</text>

      {/* view cube */}
      <path d="M1512 130L1562 140L1566 185L1515 192Z" fill="#aaa" opacity=".55" filter="url(#cubeSoft)" />
      <path d="M1513.500 119.500H1560.500L1564 157L1511 156.500Z" fill="#f2f2f2" />
      <path d="M1511 156.500L1564 157L1560 185H1513.500Z" fill="url(#cubeFront)" />
      <rect x="1520" y="149" width="34" height="14" fill="#e4e6ee" />
      <path d="M1513.500 119.500H1560.500L1564 157L1560 184M1513.500 119.500L1511 156M1511 156.500L1564 157" stroke="#b0b0b0" strokeWidth="1.100" strokeDasharray="9 3" />
      <path d="M1513.500 185.500H1567.500" stroke="#f08080" strokeWidth="1.600" />
      <path d="M1509.500 154L1513.500 185.500" stroke="#6464e6" strokeWidth="1.800" />
      <text x="1526.500" y="140.500" fontSize="10" fontWeight="bold" fill="#a0a2a4" textLength="21">TOP</text>
      <text x="1519.500" y="175" fontSize="8.500" fontWeight="bold" fill="#9c9ea0" textLength="35">FRONT</text>
      <text x="1503.500" y="151.500" fontSize="14" fontWeight="bold" fill="#9a9af8" textLength="8" lengthAdjust="spacingAndGlyphs">Z</text>
      <text x="1569" y="190.500" fontSize="14" fontWeight="bold" fill="#f79a9a" textLength="8" lengthAdjust="spacingAndGlyphs">X</text>
    </svg>
  );
}

function ValueBox() {
  return (
    <div className="absolute left-[756px] top-[287px] flex h-[22px] w-[104px] items-center bg-[#f2f2f2]">
      <Svg w={4} h={20} cls="ml-[5px]"><path d="M.5 0V20M2.500 1V20" stroke="#ccc" strokeDasharray="1 1.500" /></Svg>
      <div className="ml-[15px] mt-[-1px] flex h-[17px] w-[66px] items-center justify-center border border-[#c8c8c8] bg-white">
        <span className="ml-[2px] h-[14px] whitespace-nowrap border-r border-[#222] bg-[#0078d7] text-[11px] leading-[14px] tracking-[-0.3px] text-white">7 mm</span>
      </div>
      <Caret cls="ml-[5px]" w={6} />
    </div>
  );
}

function NavBar() {
  return (
    <div className="flex h-[24px] w-[245px] items-center bg-[#f2f2f2]">
      <Svg w={16} h={16} cls="ml-[3px]">
        <ellipse cx="8" cy="8" rx="3" ry="7.300" stroke="#3f4450" fill="#fff" />
        <path d="M4 5.500C-1 6.500 -1 10 4 11M12 5.500C17 6.500 17 10 11 11.500" stroke="#3f4450" strokeWidth="1.200" />
        <path d="M9 5.500H13M11 3.500V7.500" stroke="#3f4450" />
        <path d="M5.500 8H10.500M8 5.500V10.500" stroke="#1f7bd8" strokeWidth="1.400" />
      </Svg>
      <Caret cls="ml-[5px]" w={6} />
      <Svg w={17} h={16} cls="ml-[6px]">
        <path d="M1 6.500L2.500 3L5 4.500L6.500 2.500L12.500 .8L11.500 4.500L14.500 5V6.500" stroke="#6c7280" fill="#c5c9d1" />
        <rect x="1" y="6.500" width="15" height="8.800" fill="#f0f1f3" stroke="#3f4450" strokeWidth="1.300" />
        <rect x="4.500" y="9.200" width="8" height="3" fill="#b8bcc8" stroke="#3f4450" />
      </Svg>
      <Svg w={17} h={17} cls="ml-[9px]">
        <path d="M5 15L1 9.500C.5 8 2 8 3 9L4.500 10.500L3.500 4C3.500 2.500 5 2.500 5.300 4L6.500 8L7 2C7 .5 9 .5 9 2V8L10.500 3C11 1.500 12.500 2 12.200 3.500L11.500 9L14 6C15 5 16.300 6 15.500 7L12 14.500V16.500H6Z" fill="#fff" stroke="#3f4450" strokeWidth="1.100" />
      </Svg>
      <Svg w={18} h={16} cls="ml-[8px]">
        <circle cx="6" cy="6.500" r="4.700" fill="#dcefef" stroke="#5c626d" strokeWidth="1.300" />
        <path d="M9.500 10L13.500 14.500" stroke="#333" strokeWidth="2.600" />
        <path d="M11.500 3.500H17M14.200 .8V6.200M11.500 8H17" stroke="#333" />
      </Svg>
      <Svg w={17} h={17} cls="ml-[8px]">
        <circle cx="7" cy="7" r="6" fill="#e7f1f1" stroke="#4c525d" strokeWidth="1.400" />
        <rect x="4.500" y="4.500" width="5" height="5" fill="#fff" stroke="#4c525d" />
        <path d="M11.500 11.500L15.500 15.500" stroke="#333" strokeWidth="2.800" />
      </Svg>
      <Caret cls="ml-[5px]" w={6} />
      <Svg w={16} h={16} cls="ml-[14px]">
        <rect x=".7" y=".7" width="14.600" height="11.600" fill="#e5e7eb" stroke="#4a4f5b" strokeWidth="1.300" />
        <rect x="2.500" y="2.500" width="11" height="8" fill="#9fc2ec" stroke="#4d74a8" />
        <path d="M4 15L6.500 12.500H9.500L12 15Z" fill="#ddd" stroke="#4a4f5b" />
      </Svg>
      <Caret cls="ml-[2px]" w={6} />
      <Svg w={16} h={16} cls="ml-[7px]">
        <rect x=".5" y=".5" width="15" height="15" fill="#fff" stroke="#4a4f5b" />
        <path d="M3.500 1V15M6.500 1V15M9.500 1V15M12.500 1V15M1 3.500H15M1 6.500H15M1 9.500H15M1 12.500H15" stroke="#868b98" />
      </Svg>
      <Caret cls="ml-[2px]" w={6} />
      <Svg w={16} h={14} cls="ml-[7px]">
        <rect x=".6" y=".6" width="14.800" height="12.800" fill="#8fb2de" stroke="#2c4470" strokeWidth="1.200" />
        <path d="M8 0V14M0 7H16" stroke="#2c4470" strokeWidth="1.400" />
        <path d="M2.500 2.500H6V5H2.500ZM10 2.500H13.500V5H10ZM2.500 9H6V11.500H2.500ZM10 9H13.500V11.500H10Z" fill="#bdd3f0" stroke="#4a6da4" strokeWidth=".8" />
      </Svg>
      <Caret cls="ml-[2px]" w={6} />
    </div>
  );
}

/* ---------- timeline ---------- */
const stepIcons: Record<string, React.ReactNode> = {
  sketch: (
    <>
      <rect x=".8" y=".8" width="14.400" height="14.400" fill="#e8ebf0" stroke="#222" strokeWidth="1.500" />
      <path d="M4 3V12.500H13" stroke="#222" strokeWidth="1.300" />
      <path d="M5.500 11L7 7L13.500 0L16 2.500L9 9.500Z" fill="#f8c936" stroke="#94701b" strokeWidth=".8" />
    </>
  ),
  extrude: (
    <>
      <path d="M.7 4.500L3.500 .7H10.500V11.500L7.500 15.300H.7Z" fill="#8fb0da" stroke="#27365a" strokeWidth="1.200" />
      <path d="M1.500 4.500L4 1.300H10L7.300 4.500Z" fill="#dbe7f5" />
      <path d="M7.500 5V15M1 13H7.500" stroke="#27365a" strokeWidth=".8" />
      <path d="M14 15V2M12 4.500L14 1.500L16 4.500" stroke="#222" strokeWidth="1.300" />
    </>
  ),
  plane: (
    <>
      <path d="M.7 4.500L4 .7H9V11L5.500 15.300H.7Z" fill="#dfe2e8" stroke="#555b68" strokeWidth="1.200" />
      <path d="M5.500 5L9 1V11L5.500 15Z" fill="#7fb07a" stroke="#47753f" />
      <path d="M11.500 5L15.500 1V10.500L11.500 15Z" fill="#eeb08a" stroke="#a86038" />
    </>
  ),
  shell: (
    <>
      <path d="M.7 4.500L4.500 .7H15.300V11.500L11.500 15.300H.7Z" fill="#dfe2e8" stroke="#444a58" strokeWidth="1.300" />
      <rect x="3.500" y="6.500" width="6" height="6" fill="#fff" stroke="#333" strokeWidth="1.400" />
      <path d="M6 6.500V10H9.500M12 4.500V15" stroke="#444a58" />
    </>
  ),
  combine: (
    <>
      <path d="M1 3.500C1 0 10 0 10 3.500V6H12.500C16.500 6 16.500 14.500 12.500 14.500H6C4 14.500 4 11 5.500 10C3 10 1 9.500 1 8Z" fill="#c0d3ec" stroke="#4b6389" strokeWidth="1.300" />
      <path d="M1 4C2 6.500 9 6.500 10 4M10 6C8 7 8 10 10 10.500" stroke="#4b6389" />
    </>
  ),
  move: (
    <>
      <g fill="#e3e6eb" stroke="#3b404c" strokeWidth="1.200">
        <path d="M5 3L8 .6L11 3V5.500L8 7L5 5.500Z" />
        <path d="M5 10.500L8 9L11 10.500V13L8 15.400L5 13Z" />
        <path d="M.6 7.500L3 5.500L6 7V9.500L3 11L.6 9.500Z" />
        <path d="M10 7L13 5.500L15.400 7.500V9.500L13 11L10 9.500Z" />
      </g>
      <circle cx="8" cy="8" r="1.300" fill="#3b404c" />
    </>
  ),
};

const steps = ["sketch", "extrude", "sketch", "extrude", "plane", "sketch", "extrude", "shell", "sketch", "sketch", "combine", "move"];

function Timeline() {
  return (
    <div className="flex h-[48px] items-start bg-[#f1f1f1] pl-[11px]">
      <div className="mt-[16px] flex items-center text-[#444]">
        <Svg w={13} h={14}><path d="M0 0H2V14H0ZM12 1V13L2.500 7Z" fill="#444" /></Svg>
        <Svg w={13} h={14} cls="ml-[11px]"><path d="M9.500 1V13L0 7ZM10.500 4.500H13V10H10.500Z" fill="#444" /></Svg>
        <Svg w={13} h={16} cls="ml-[13px]"><path d="M0 .5V15.500L12 8Z" fill="#444" /></Svg>
        <Svg w={13} h={14} cls="ml-[11px]"><path d="M0 4.500H2V10H0ZM3 1V13L12.500 7Z" fill="#444" /></Svg>
        <Svg w={13} h={14} cls="ml-[13px]"><path d="M10 0H12V14H10ZM0 1V13L9.500 7Z" fill="#444" /></Svg>
      </div>
      <div className="ml-[18px] mt-[11px] flex flex-col">
        <div className="flex">
          {steps.map((s, i) => (
            <div key={i} className="flex w-[24px] flex-col items-center">
              <div className={`flex h-[24px] w-[24px] items-center justify-center rounded-[2px] ${i === 0 ? "bg-[#0a94d8]" : ""}`}>
                <Svg w={16} h={16} cls={i > 1 ? "opacity-35" : ""}>{stepIcons[s]}</Svg>
              </div>
              <div className={`mt-[-1px] h-[5px] w-[2px] bg-[#c8c8c8] ${i === 0 ? "ml-[2px]" : ""}`} />
            </div>
          ))}
        </div>
        <div className="ml-[5px] h-[2px] w-[272px] bg-[#c8c8c8]" />
      </div>
      <Svg w={12} h={32} cls="ml-[66px] mt-[9px]"><path d="M0 0H12V3L7 8.500V32H5V8.500L0 3Z" fill="#555" /></Svg>
      <div className="ml-auto mr-[9px] mt-[16px]"><Gear /></div>
    </div>
  );
}

/* ---------- taskbar ---------- */
function TaskButton({ children, active = false, open = false, multi = false }: { children: React.ReactNode; active?: boolean; open?: boolean; multi?: boolean }) {
  return (
    <div className={`flex h-[40px] w-[48px] flex-col items-center ${active ? "bg-[#3a3d42]" : ""}`}>
      <div className="flex h-[38px] items-center pt-[2px]">{children}</div>
      {(open || active) && (
        <div className={`flex h-[2px] justify-end bg-[#76b9ed] ${active ? "w-[48px]" : "w-[40px]"}`}>
          {multi && <div className="h-[2px] w-[9px] bg-[#4c7ca3]" />}
        </div>
      )}
    </div>
  );
}

function Taskbar() {
  return (
    <div className="flex h-[40px] bg-[#050a12] text-white">
      <TaskButton>
        <Svg w={16} h={16}><path d="M0 2.300L6.500 1.400V7.500H0ZM7.300 1.300L16 0V7.500H7.300ZM0 8.400H6.500V14.600L0 13.700ZM7.300 8.400H16V16L7.300 14.700Z" fill="#fff" /></Svg>
      </TaskButton>
      <TaskButton>
        <Svg w={17} h={17}><circle cx="10.500" cy="6.200" r="5.500" stroke="#fff" strokeWidth="1.300" /><path d="M6.500 10L.7 16" stroke="#fff" strokeWidth="1.400" /></Svg>
      </TaskButton>
      <TaskButton>
        <Svg w={17} h={16}><path d="M.7 0V3H11.300V0M.7 16V13H11.300V16M.7 5H11.300V11H.7ZM15 0V16" stroke="#fff" strokeWidth="1.200" /><rect x="13.500" y="3.500" width="3" height="3" fill="#fff" /></Svg>
      </TaskButton>
      <div className="ml-[3px] flex gap-px">
        <TaskButton open>
          <Svg w={20} h={20}>
            <path d="M1 1L18 0L19 10H1Z" fill="#3a9c8c" />
            <path d="M8 0L19 0L19 14L15 12Z" fill="#f1b32d" />
            <path d="M0 2L7 1L9 19L2 19Z" fill="#4db79a" />
            <path d="M2 19L5 15L19 12L19 19Z" fill="#e0204b" />
            <path d="M6 19L9 19L9 14L5 15Z" fill="#75243f" />
            <path d="M5 6L14 4L16 14L7 16Z" fill="#fff" />
            <path d="M13 7.300C12 6.200 8.600 6.500 8.800 8.300C9 10 12.500 9.200 12.600 11C12.700 12.800 9.500 13 8.300 11.600" stroke="#1c2430" strokeWidth="1.700" />
          </Svg>
        </TaskButton>
        <TaskButton open multi>
          <Svg w={22} h={19}>
            <path d="M0 2C0 1 .5 .5 1.500 .5H7L9 2.500H20C21 2.500 21.500 3 21.500 4V17H0Z" fill="#fbdc83" />
            <path d="M0 2.500H9L8 4H0Z" fill="#e9bb45" />
            <path d="M4 18V12C4 11 5 10 6 10H16C17 10 18 11 18 12V18H14.500V14H7.500V18Z" fill="#38a9e0" />
          </Svg>
        </TaskButton>
        <TaskButton active><FusionLogo size={24} /></TaskButton>
        <TaskButton open>
          <Svg w={22} h={22}>
            <circle cx="11" cy="11" r="11" fill="#fbc63c" />
            <path d="M11 11L1.500 5.500A11 11 0 0 1 20.500 5.500Z" fill="#dd4b3e" />
            <path d="M1.500 5.500A11 11 0 0 0 11 22L15.500 14L11 11L6 13.500Z" fill="#2ba14b" />
            <path d="M11 5.500H20.500A11 11 0 0 1 11 22L15.800 13.700Z" fill="#fbc63c" />
            <circle cx="11" cy="11" r="5.300" fill="#fff" />
            <circle cx="11" cy="11" r="4.300" fill="#4587f0" />
          </Svg>
        </TaskButton>
      </div>
      <div className="ml-auto flex items-center">
        <Svg w={15} h={16}>
          <circle cx="10.500" cy="3.300" r="2.700" stroke="#fff" strokeWidth="1.200" />
          <circle cx="4" cy="8.500" r="2.500" stroke="#fff" strokeWidth="1.200" />
          <path d="M.7 15C.7 10.500 7.500 10.500 7.500 15M7.500 7.500C9 5.500 13.500 5.500 14 9.500" stroke="#fff" strokeWidth="1.200" />
        </Svg>
        <Svg w={12} h={7} cls="ml-[22px]"><path d="M.5 6.500L6 1L11.500 6.500" stroke="#fff" strokeWidth="1.200" /></Svg>
        <Svg w={16} h={12} cls="ml-[10px]">
          <path d="M4 12C-1 12 -1 5.500 3.500 5.500C4 .5 11 -.5 12 4.500C17 4.500 17.500 11.500 13 12Z" fill="#fff" />
          <path d="M8 3V7.500M8 8.800V10.500" stroke="#050a12" strokeWidth="1.500" />
        </Svg>
        <Svg w={17} h={12} cls="ml-[8px]">
          <path d="M7 3.500H14.500V10.500H3.500V7.500M14.500 5.500H16V8.500H14.500" stroke="#fff" strokeWidth="1.200" />
          <path d="M.5 2H6V5L4.500 6.500H2L.5 5ZM2 0V2M4.500 0V2" stroke="#fff" strokeWidth="1.100" />
        </Svg>
        <Svg w={13} h={13} cls="ml-[10px]">
          <path d="M1 13C1 6 6 1 13 1M4 13C4 8 8 4 13 4M7 13C7 10 10 7 13 7" stroke="#c9cbcd" strokeWidth="1.100" />
          <rect x="10" y="10" width="3" height="3" fill="#fff" />
        </Svg>
        <Svg w={17} h={14} cls="ml-[8px]">
          <path d="M.6 5H3L6.500 1.500V12.500L3 9H.6ZM8.500 5C9.500 6.500 9.500 7.500 8.500 9M11 3C13 5.500 13 8.500 11 11M13.500 1C16.500 4.500 16.500 9.500 13.500 13" stroke="#fff" strokeWidth="1.100" />
        </Svg>
        <div className="ml-[7px] mr-px flex w-[26px] flex-col items-center whitespace-nowrap font-['Open_Sans',sans-serif] text-[12px] leading-[17px] tracking-[-0.4px]">
          <span>ENG</span><span>US</span>
        </div>
        <div className="ml-[10px] flex w-[60px] flex-col items-center whitespace-nowrap font-['Open_Sans',sans-serif] text-[12px] leading-[17px] tracking-[-0.4px]">
          <span>11:47</span><span>26/07/2018</span>
        </div>
        <Svg w={16} h={16} cls="ml-[17px]"><path d="M.6 .6H15.400V12.400H10.500L8 15L5.500 12.400H.6Z" stroke="#fff" strokeWidth="1.200" /></Svg>
        <div className="ml-[20px] h-[40px] w-px bg-[#4b5057]" />
        <div className="w-[4px]" />
      </div>
    </div>
  );
}

export default function App() {
  return (
    <div className="flex h-[900px] w-[1600px] flex-col overflow-hidden bg-white font-['Liberation_Sans',Arial,sans-serif]">
      <Defs />
      <TitleBar />
      <TabBar />
      <QuickBar />
      <div className="relative h-[696px]">
        <ModelCanvas />
        <ValueBox />
        <div className="relative flex h-[696px] flex-col px-[4px] pb-[4px] pt-[4px]">
          <Ribbon />
          <div className="flex items-start justify-between pt-[4px]">
            <BrowserPanel />
            <div className="pt-[118px]"><EditFeature /></div>
          </div>
          <div className="mt-auto flex items-end">
            <CommentsPanel />
            <div className="ml-[373px]"><NavBar /></div>
            <span className="mb-[4px] ml-auto mr-[34px] whitespace-nowrap text-[11px] font-bold tracking-[0.1px] text-[#333]">1 Profile | Area : 14.577 mm^2</span>
          </div>
        </div>
      </div>
      <div className="flex h-[27px] items-center border-x border-b-[3px] border-t border-[#c8c8c8] bg-[#f1f1f1] pl-[5px]">
        <RoundSign plus />
        <span className="ml-[10px] font-[Roboto,sans-serif] text-[11.5px] tracking-[-0.65px] text-[#555]">TEXT COMMANDS</span>
      </div>
      <Timeline />
      <Taskbar />
    </div>
  );
}
